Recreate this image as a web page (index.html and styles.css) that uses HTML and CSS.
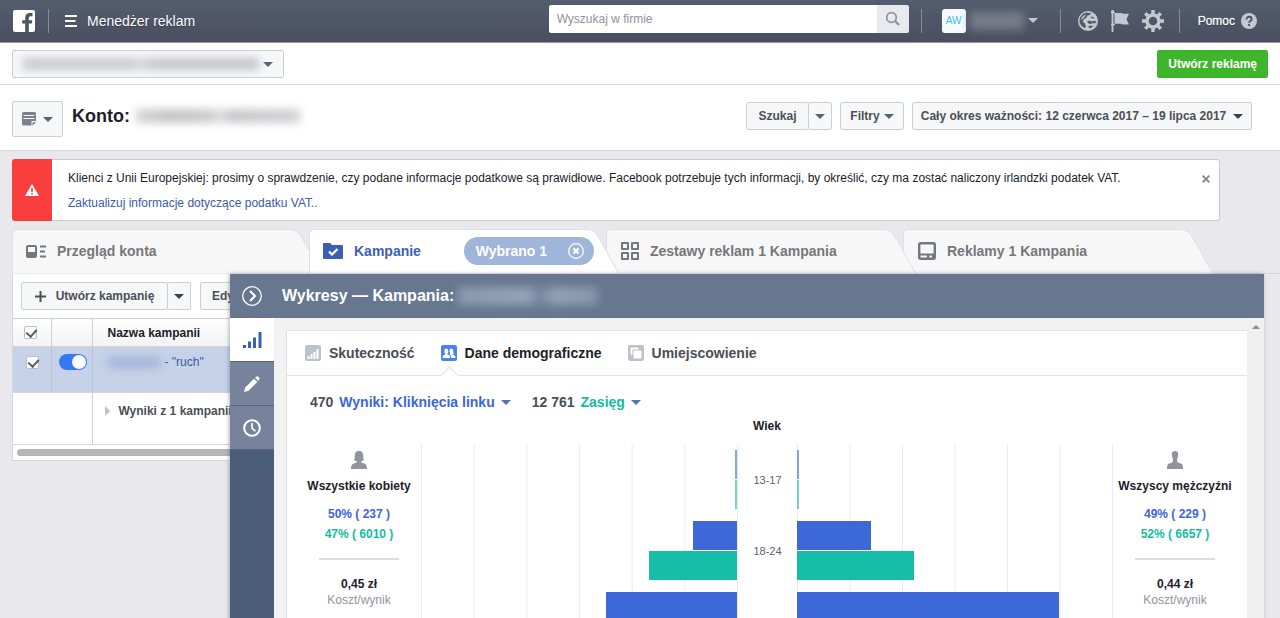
FILE: index.html
```html
<!DOCTYPE html>
<html lang="pl">
<head>
<meta charset="utf-8">
<title>Menedżer reklam</title>
<link rel="stylesheet" href="styles.css">
</head>
<body>
<header class="topbar">
  <a class="logo" href="#" aria-label="Facebook">
    <svg width="22" height="22" viewBox="0 0 22 22"><rect width="22" height="22" rx="2" fill="#fff"/><path d="M12.200 22v-8.400H9.200v-3.400h3V7.700c0-3 1.800-4.700 4.600-4.700 1.300 0 2.400.1 2.700.1v3.100h-1.800c-1.500 0-1.900.8-1.900 1.800v2.200h3.500l-.5 3.400h-3V22z" fill="#4d5566"/></svg>
  </a>
  <span class="divider"></span>
  <button class="menu" type="button">
    <svg width="12" height="12" viewBox="0 0 12 12"><path d="M0 1h12M0 6h10.500M0 11h12" stroke="#fff" stroke-width="2"/></svg>
    Menedżer reklam
  </button>
  <form class="search">
    <input type="text" placeholder="Wyszukaj w firmie" aria-label="Wyszukaj w firmie">
    <button type="button" aria-label="Wyszukaj"><svg width="16" height="16" viewBox="0 0 16 16"><circle cx="6.500" cy="6.500" r="4.800" fill="none" stroke="#90949c" stroke-width="1.800"/><path d="M10 10l4.200 4" stroke="#90949c" stroke-width="2.400"/></svg></button>
  </form>
  <span class="divider"></span>
  <button class="account" type="button" aria-label="Konto użytkownika">
    <span class="avatar">AW</span><span class="smudge smudge-user"></span><span class="caret caret-light"></span>
  </button>
  <span class="divider"></span>
  <nav class="top-icons">
    <button type="button" aria-label="Powiadomienia"><svg width="20" height="20" viewBox="0 0 20 20"><circle cx="10" cy="10" r="10" fill="#c4c8d0"/><path d="M8.500 1.500c2 .3 3 1 5 .8l-2 1.700-2 .5L8 7 5.500 8.500 5 11l2 1.500 1 3-1.500 1.500C3.500 15.500 1.500 13 1.500 10c0-4 3-7.800 7-8.500zM9 10.500l2.500-1 2 1 3-.8 2 1-1.500 1.800-2-.5-2 1-2.500-.5z" fill="#515a6b"/><path d="M3 8.500C4 6 5.500 4 8 3.500L6.500 6 4 8.500zM13.500 6l2.500.5.500 1.500-2-.5zM9.500 16l3-1.500 2.500 1-3 2.500z" fill="#c4c8d0"/><path d="M10 15.500l3-1 2.500.8-3.500 2.200zM12.500 5.500l3 .5.8 1.800-2.800-.6z" fill="#515a6b"/></svg></button>
    <button type="button" aria-label="Strony"><svg width="18" height="22" viewBox="0 0 18 22"><path d="M1.500 1v21" stroke="#c4c8d0" stroke-width="1.800"/><circle cx="1.500" cy="1.300" r="1.300" fill="#c4c8d0"/><path d="M3.500 3h7c1 0 1 .8 2 .8H18l-2.500 5.400L18 14.500h-6c-1 0-1-.8-2-.8H3.500z" fill="#c4c8d0"/><path d="M0 14.500h4M0 2.500h4" stroke="#c4c8d0" stroke-width="1.500"/></svg></button>
    <button type="button" aria-label="Ustawienia"><svg width="22" height="22" viewBox="-11 -11 22 22"><g fill="none" stroke="#c4c8d0"><circle r="6" stroke-width="3.400"/><g stroke-width="3.400"><path id="teeth" d="M0-11v4.500M0 6.500V11M-11 0h4.500M6.500 0H11"/><use href="#teeth" transform="rotate(45)"/></g></g></svg></button>
  </nav>
  <span class="divider"></span>
  <a class="help" href="#">Pomoc
    <svg width="16" height="16" viewBox="0 0 16 16"><circle cx="8" cy="8" r="8" fill="#c4c8d0"/><path d="M5.500 6.400c0-3.700 5.200-3.300 5.200-.3C10.700 8 8.100 8 8.100 9.800M8.100 11v2" fill="none" stroke="#4c5263" stroke-width="1.900"/></svg>
  </a>
</header>

<div class="accountbar">
  <button class="btn account-select" type="button" aria-label="Wybierz konto"><span class="smudge smudge-account"></span><span class="caret"></span></button>
  <button class="create" type="button">Utwórz reklamę</button>
</div>

<div class="titlebar">
  <button class="btn note" type="button" aria-label="Raporty">
    <svg width="14" height="14" viewBox="0 0 14 14"><path d="M1.500 0h11A1.500 1.500 0 0 1 14 1.500V9h-4.500v4.500h-8A1.500 1.500 0 0 1 0 12V1.500A1.500 1.500 0 0 1 1.500 0z" fill="#7b818d"/><path d="M10.500 10.300H14l-3.500 3.500z" fill="#7b818d"/><path d="M1.500 3.500h11M1.500 6.500h11" stroke="#f6f7f9"/></svg>
    <span class="caret"></span>
  </button>
  <h1>Konto: <span class="smudge smudge-title"></span></h1>
  <div class="filters">
    <div class="split"><button class="btn find" type="button">Szukaj</button><button class="btn arrow" type="button" aria-label="Opcje wyszukiwania"><span class="caret"></span></button></div>
    <button class="btn filter" type="button">Filtry <span class="caret"></span></button>
    <button class="btn range" type="button">Cały okres ważności: 12 czerwca 2017 – 19 lipca 2017 <span class="caret caret-dark"></span></button>
  </div>
</div>

<main class="main">
  <section class="alert">
    <div class="alert-icon"><svg width="14" height="12" viewBox="0 0 14 12"><path d="M7 0l7 12H0z" fill="#fff"/><path d="M7 4v4M7 9v1.500" stroke="#fa3e3e" stroke-width="1.600"/></svg></div>
    <div class="alert-text">
      <p>Klienci z Unii Europejskiej: prosimy o sprawdzenie, czy podane informacje podatkowe są prawidłowe. Facebook potrzebuje tych informacji, by określić, czy ma zostać naliczony irlandzki podatek VAT.</p>
      <a href="#">Zaktualizuj informacje dotyczące podatku VAT..</a>
    </div>
    <button class="close" type="button" aria-label="Zamknij"><svg width="8" height="8" viewBox="0 0 8 8"><path d="M.7.7l6.600 6.600M7.300.7L.7 7.300" stroke="#7f8591" stroke-width="1.800"/></svg></button>
  </section>

  <nav class="tabs">
    <a class="tab tab-1" href="#">
      <svg class="shape" width="312" height="45" viewBox="0 0 312 45"><path d="M.5 45V5Q.5.500 5 .5H278Q286 .5 290 9L310 45z"/></svg>
      <svg width="20" height="13" viewBox="0 0 20 13"><path d="M2 0h7a2 2 0 0 1 2 2v9a2 2 0 0 1-2 2H2a2 2 0 0 1-2-2V2a2 2 0 0 1 2-2zm0 2v5h7V2z" fill="#75777b" fill-rule="evenodd"/><path d="M14 1.500h6M14 6.500h5M14 11.500h6" stroke="#75777b" stroke-width="2"/></svg>
      <span>Przegląd konta</span>
    </a>
    <div class="tab tab-2 active">
      <svg class="shape" width="312" height="45" viewBox="0 0 312 45"><path d="M.5 45V5Q.5.500 5 .5H278Q286 .5 290 9L310 45z"/></svg>
      <svg width="20" height="16" viewBox="0 0 20 16"><path d="M1 0h6l2 2h10q1 0 1 1v12q0 1-1 1H1q-1 0-1-1V1q0-1 1-1z" fill="#3b5fb5"/><path d="M6 8.500l3 3L14.500 6" fill="none" stroke="#fff" stroke-width="2.200"/></svg>
      <a href="#">Kampanie</a>
      <button class="chip" type="button">Wybrano 1
        <svg width="16" height="16" viewBox="0 0 16 16"><circle cx="8" cy="8" r="7.300" fill="none" stroke="#fff" stroke-width="1.200"/><path d="M5.500 5.500l5 5M10.500 5.500l-5 5" stroke="#fff" stroke-width="2.200"/></svg>
      </button>
    </div>
    <a class="tab tab-3" href="#">
      <svg class="shape" width="312" height="45" viewBox="0 0 312 45"><path d="M.5 45V5Q.5.500 5 .5H278Q286 .5 290 9L310 45z"/></svg>
      <svg width="18" height="18" viewBox="0 0 18 18"><path d="M1 1h6v6H1zM11 1h6v6h-6zM1 11h6v6H1zM11 11h6v6h-6z" fill="none" stroke="#75777b" stroke-width="2" stroke-linejoin="round"/></svg>
      <span>Zestawy reklam 1 Kampania</span>
    </a>
    <a class="tab tab-4" href="#">
      <svg class="shape" width="312" height="45" viewBox="0 0 312 45"><path d="M.5 45V5Q.5.500 5 .5H278Q286 .5 290 9L310 45z"/></svg>
      <svg width="18" height="18" viewBox="0 0 18 18"><rect x="1.200" y="1.200" width="15.600" height="15.600" rx="1.500" fill="none" stroke="#75777b" stroke-width="2.400"/><path d="M1 11.500h16V17H1z" fill="#75777b"/><path d="M2.500 13.500H9v2H2.500zM11.500 13.500H14v2h-2.500z" fill="#f6f7f9"/></svg>
      <span>Reklamy 1 Kampania</span>
    </a>
  </nav>

  <div class="workspace">
    <section class="list">
      <div class="toolbar">
        <div class="split"><button class="btn add" type="button"><svg width="11" height="11" viewBox="0 0 11 11"><path d="M5.500 0v11M0 5.500h11" stroke="#4b4f56" stroke-width="2"/></svg>Utwórz kampanię</button><button class="btn arrow" type="button" aria-label="Więcej"><span class="caret caret-dark"></span></button></div>
        <button class="btn edit" type="button">Edytuj</button>
      </div>
      <table>
        <thead>
          <tr><th class="c-check"><input type="checkbox" checked aria-label="Zaznacz wszystkie"></th><th class="c-switch"></th><th class="c-name">Nazwa kampanii</th></tr>
        </thead>
        <tbody>
          <tr class="selected"><td class="c-check"><input type="checkbox" checked aria-label="Zaznacz kampanię"></td><td class="c-switch"><input class="switch" type="checkbox" checked aria-label="Kampania aktywna"></td><td class="c-name"><a href="#"><span class="smudge smudge-row"></span>- "ruch"</a></td></tr>
          <tr class="summary"><td colspan="2"></td><td class="c-name"><span class="triangle"></span>Wyniki z 1 kampanii</td></tr>
        </tbody>
      </table>
      <div class="hscroll"><span></span></div>
    </section>

    <aside class="drawer">
      <header class="drawer-head">
        <button type="button" aria-label="Zwiń"><svg width="20" height="20" viewBox="0 0 20 20"><circle cx="10" cy="10" r="9.300" fill="none" stroke="#fff" stroke-width="1.300"/><path d="M8 5l5 5-5 5" fill="none" stroke="#fff" stroke-width="2"/></svg></button>
        <h2>Wykresy — Kampania:</h2><span class="smudge smudge-drawer"></span>
      </header>
      <div class="drawer-body">
        <nav class="rail">
          <button class="on" type="button" aria-label="Wykresy"><svg width="19" height="16" viewBox="0 0 19 16"><path d="M0 13h3v3H0zM5 9.500h3V16H5zM10 5.500h3V16h-3zM15.500 0h3v16h-3z" fill="#3b5fc0"/></svg></button>
          <button type="button" aria-label="Edytuj"><svg width="16" height="16" viewBox="0 0 16 16"><path d="M0 16l1.200-4.500L10 2.700 13.300 6l-8.800 8.800zM11 1.700L12.700.5q.8-.6 1.600.2l1 1q.8.800.1 1.600L14.300 5z" fill="#fff"/></svg></button>
          <button type="button" aria-label="Historia"><svg width="18" height="18" viewBox="0 0 18 18"><circle cx="9" cy="9" r="7.800" fill="none" stroke="#fff" stroke-width="2"/><path d="M9 4v5.200l3.300 3" fill="none" stroke="#fff" stroke-width="1.700"/></svg></button>
        </nav>
        <div class="content">
          <div class="card">
            <nav class="card-tabs">
              <a href="#"><svg width="16" height="16" viewBox="0 0 16 16"><rect width="16" height="16" rx="2" fill="#bdc1c9"/><path d="M2.500 11h2v3h-2zM5.500 9h2v5h-2zM8.500 7h2v7h-2zM11.500 4h2v10h-2z" fill="#fff"/></svg>Skuteczność</a>
              <a class="current" href="#"><svg width="16" height="16" viewBox="0 0 16 16"><rect width="16" height="16" rx="2" fill="#4c81f5"/><path d="M1.500 13q0-2.600 1.500-3l1.300-.5V8.600Q3.300 7.500 3.300 6q0-2.600 2-2.600t2 2.600q0 1.500-.9 2.600v.9L8 10q1.200.4 1.200 3z" fill="#fff"/><path d="M8.700 9.200l.7-.4Q8.200 7 8.500 5.300q.3-1.900 1.800-1.900 1.800 0 1.900 2.200 0 1.600.6 3l-1.200.6v.4l1.700.6q1.200.4 1.200 2.800h-4.200q0-2.600-1.600-3.500z" fill="#fff"/></svg>Dane demograficzne</a>
              <a href="#"><svg width="16" height="16" viewBox="0 0 16 16"><rect width="16" height="16" rx="2" fill="#bdc1c9"/><path d="M3.500 9.500v-6h7" fill="none" stroke="#fff" stroke-width="1.800"/><rect x="5.500" y="5.500" width="8" height="8" rx="1" fill="#fff"/></svg>Umiejscowienie</a>
            </nav>
            <div class="metrics">
              <button type="button">470 <b class="blue">Wyniki: Kliknięcia linku</b><span class="caret caret-blue"></span></button>
              <button type="button">12 761 <b class="green">Zasięg</b><span class="caret caret-blue"></span></button>
            </div>
            <div class="chart-title">Wiek</div>
            <div class="chart">
              <div class="person">
                <svg width="16" height="18" viewBox="0 0 16 18"><path d="M8 0c3.300 0 4.200 2 4.200 4.600 0 2.200.6 3.600.4 4.800l-2.300.8v1.300l3.600 1.300Q16 13.700 16 18H0q0-4.300 2.100-5.200l3.600-1.300v-1.300l-2.300-.8c-.2-1.200.4-2.600.4-4.800C3.800 2 4.700 0 8 0z" fill="#90949c"/></svg>
                <strong>Wszystkie kobiety</strong>
                <b class="blue">50% ( 237 )</b><b class="green">47% ( 6010 )</b><hr>
                <strong class="cost">0,45 zł</strong><small>Koszt/wynik</small>
              </div>
              <div class="plot plot-left">
                <div class="group faint"><i class="bar-blue" style="width:0.6%"></i><i class="bar-green" style="width:0.6%"></i></div>
                <div class="group"><i class="bar-blue" style="width:13.9%"></i><i class="bar-green" style="width:27.8%"></i></div>
                <div class="group"><i class="bar-blue" style="width:41.600%"></i></div>
              </div>
              <div class="ages"><span>13-17</span><span>18-24</span></div>
              <div class="plot plot-right">
                <div class="group faint"><i class="bar-blue" style="width:0.6%"></i><i class="bar-green" style="width:0.6%"></i></div>
                <div class="group"><i class="bar-blue" style="width:23.4%"></i><i class="bar-green" style="width:37.200%"></i></div>
                <div class="group"><i class="bar-blue" style="width:83.300%"></i></div>
              </div>
              <div class="person">
                <svg width="16" height="18" viewBox="0 0 16 18"><path d="M8 0c2.500 0 3.400 1.600 3.200 4-.1 2-.9 2.800-1.100 4v2q.2 1.500 2 2l2.400.8Q16 13.500 16 18H0q0-4.500 1.500-5.200L3.900 12q1.800-.5 2-2V8C5.700 6.800 4.900 6 4.800 4 4.600 1.600 5.500 0 8 0z" fill="#90949c"/></svg>
                <strong>Wszyscy mężczyźni</strong>
                <b class="blue">49% ( 229 )</b><b class="green">52% ( 6657 )</b><hr>
                <strong class="cost">0,44 zł</strong><small>Koszt/wynik</small>
              </div>
            </div>
          </div>
        </div>
        <div class="vscroll"><span></span></div>
      </div>
    </aside>
  </div>
</main>
</body>
</html>
```

FILE: styles.css
```css
* { box-sizing: border-box; }
body {
  margin: 0;
  min-height: 100vh;
  overflow: hidden;
  background: #e9e9ed;
  color: #1d2129;
  font: 12px/16px "Liberation Sans", Arial, sans-serif;
}
button, input { font: inherit; color: inherit; }
button { border: 0; background: none; padding: 0; cursor: pointer; }
a { color: #3b5ba5; text-decoration: none; }
svg { display: block; flex: none; }
h1, h2, p { margin: 0; }

.caret {
  flex: none;
  width: 0;
  height: 0;
  border: 5px solid transparent;
  border-top-color: #5a6172;
  border-bottom: 0;
}
.caret-light { border-top-color: #c4c8d0; }
.caret-dark { border-top-color: #3c4048; }
.caret-blue { border-top-color: #5273b8; }

/* Obscured names */
.smudge { display: inline-block; flex: none; filter: blur(4px); }
.smudge-user { width: 54px; height: 18px; background: #767c89; }
.smudge-account { width: 236px; height: 12px; background: linear-gradient(90deg, #c8c9cf 45%, #d6d7dc 50%, #c4c6cd 56%); }
.smudge-title { width: 164px; height: 14px; background: linear-gradient(90deg, #d6d6d8, #c4c4c7 20%, #cbcbcd 45%, #e0e0e1 51%, #c8c8ca 58%, #d2d2d4); }
.smudge-row { width: 52px; height: 11px; margin-right: 5px; background: #a3b5dc; vertical-align: middle; }
.smudge-drawer { width: 140px; height: 18px; background: linear-gradient(90deg, #8b9aae, #95a3b6 50%, #73849b 58%, #94a2b5 70%, #8495aa); }

.topbar {
  display: flex;
  align-items: center;
  height: 43px;
  padding: 0 23px 1px 13px;
  border-bottom: 1px solid #9599a5;
  background: linear-gradient(#545d6e, #4a4f5f);
  color: #fff;
}
.divider { width: 1px; height: 24px; background: #858b98; }
.logo + .divider { margin: 0 16px 0 13px; }
.menu { display: flex; align-items: center; gap: 10px; font-size: 14px; text-shadow: 0 1px 1px #333a48; }
.search { display: flex; align-self: flex-start; width: 360px; height: 28px; margin: 5px 12px 0 auto; border-radius: 2px; overflow: hidden; }
.search input { flex: 1; min-width: 0; border: 0; padding: 0 8px; background: #fff; color: #1d2129; }
.search input::placeholder { color: #8d949e; opacity: 1; }
.search button { display: grid; place-items: center; width: 32px; background: #e9eaed; }
.account { display: flex; align-items: center; gap: 4px; margin: 0 22px 0 20px; }
.avatar { width: 24px; height: 24px; border-radius: 3px; background: #f4fafe; color: #4cb8e8; font-size: 10px; line-height: 24px; }
.top-icons { display: flex; align-items: center; gap: 13px; margin: 0 15px 0 17px; }
.help { display: flex; align-items: center; gap: 6px; margin-left: 18px; color: #fff; text-shadow: 0 1px 1px #333a48, 0 0 1px #fff; }

.btn {
  display: flex;
  align-items: center;
  justify-content: center;
  height: 28px;
  border: 1px solid #cdd0d6;
  border-radius: 2px;
  background: #f6f7f9;
  color: #4b4f56;
  font-weight: bold;
  white-space: nowrap;
}
.split { display: flex; }
.split .btn + .btn { margin-left: -1px; }
.arrow { width: 24px; }

.accountbar { display: flex; justify-content: space-between; padding: 7px 12px 6px; border-bottom: 1px solid #d3d5d9; background: #fff; }
.account-select { gap: 4px; width: 272px; }
.create { height: 28px; padding: 0 11px; border-radius: 2px; background: #3fb52b; color: #fff; font-weight: bold; }

.titlebar { display: flex; align-items: flex-start; padding: 16px 28px 13px 12px; border-bottom: 1px solid #d8d9dc; background: #fff; }
.note { gap: 7px; width: 51px; height: 36px; }
.titlebar h1 { display: flex; align-items: center; gap: 6px; margin-left: 9px; font-size: 18px; line-height: 30px; }
.filters { display: flex; gap: 8px; margin-left: auto; padding-top: 1px; }
.find { width: 63px; }
.filter { gap: 4px; width: 64px; }
.range { gap: 7px; width: 340px; }

.main { padding: 8px 0 0 12px; }
.alert { display: flex; min-height: 62px; margin-right: 60px; border: 1px solid #c9cad0; border-left: 0; border-radius: 3px; background: #fff; }
.alert-icon { display: grid; place-items: center; width: 40px; margin: -1px 0; border-radius: 3px 0 0 3px; background: #fa3e3e; }
.alert-text { flex: 1; padding: 10px 0 8px 16px; }
.alert-text p { margin-bottom: 9px; }
.close { align-self: flex-start; padding: 15px 9px; }

.tabs { display: flex; margin-top: 8px; padding-right: 60px; border-bottom: 1px solid #d5d6da; }
.tab { position: relative; display: flex; align-items: center; width: 297px; height: 44px; padding-left: 14px; color: #75777b; font-size: 14px; font-weight: bold; white-space: nowrap; }
.tab > :not(.shape) { position: relative; }
.tab .shape { position: absolute; left: 0; top: 0; }
.shape path { fill: #f7f7f8; stroke: #dfdfe5; }
.active .shape path { fill: #fff; }
.tab-1 { z-index: 1; }
.tab-2 { z-index: 4; }
.tab-3 { z-index: 3; padding-left: 15px; }
.tab-4 { z-index: 2; padding-left: 15px; }
.tab span, .tab > a { margin-left: 11px; }
.tab > a { color: #3b5fb5; }
.chip { display: flex; align-items: center; gap: 21px; height: 28px; margin-left: auto; margin-right: 12px; padding: 0 10px 0 12px; border-radius: 14px; background: #a0b5da; color: #fff; font-weight: bold; }

.workspace { position: relative; }
.list { border: 1px solid #d5d6da; border-top: 0; background: #fff; margin-right: 60px; overflow: hidden; }
.toolbar { display: flex; gap: 9px; padding: 8px 8px; }
.add { gap: 10px; width: 147px; padding: 0 6px; }
.edit { padding: 0 11px; }
table { width: 100%; border-collapse: collapse; border-top: 1px solid #cfd0d4; }
th, td { padding: 0; text-align: left; border-right: 1px solid #ced0d6; }
th { height: 28px; background: linear-gradient(#fff, #f2f2f4); border-bottom: 1px solid #d5d6da; }
.selected td { height: 46px; padding-top: 7px; vertical-align: top; background: #c5d2e7; border-right-color: #b9c4d8; border-bottom: 1px solid #d0d4dc; }
.c-check { width: 38px; padding-left: 11px; }
.selected .c-check { padding: 9px 0 0 13px; }
.c-switch { width: 41px; padding-left: 7px; }
.c-name { padding-left: 15px; }
.summary td { height: 52px; padding-top: 10px; vertical-align: top; border-bottom: 1px solid #d5d6da; color: #4b4f56; font-weight: bold; }
.summary .c-name { padding-left: 12px; }
.triangle { display: inline-block; margin-right: 9px; border: 5px solid transparent; border-left-color: #bfc1c6; border-right: 0; vertical-align: -1px; }
input[type="checkbox"] {
  appearance: none;
  display: block;
  width: 13px;
  height: 13px;
  margin: 0;
  border: 1px solid #b9bcc4;
  border-radius: 2px;
  background: #fff;
}
.c-check input::before {
  content: "";
  display: block;
  width: 5px;
  height: 8px;
  margin: 0 0 0 3px;
  border: solid #555b66;
  border-width: 0 2px 2px 0;
  transform: rotate(42deg);
}
input.switch[type="checkbox"] { width: 28px; height: 16px; padding: 1px; border: 0; border-radius: 8px; background: #3578f5; }
.switch::before { content: ""; display: block; width: 14px; height: 14px; margin-left: 12px; border-radius: 7px; background: #fff; }
.hscroll { padding: 4px; }
.hscroll span { display: block; width: 60%; height: 7px; border-radius: 4px; background: #b5b5b6; }

/* Chart drawer, laid over the campaign list */
.drawer { position: absolute; z-index: 5; top: 0; left: 218px; right: 16px; box-shadow: -1px 0 4px rgba(60, 70, 90, .4); }
.drawer-head { display: flex; align-items: center; height: 44px; padding-left: 12px; background: #66778f; color: #fff; }
.drawer-head h2 { margin: 0 4px 0 20px; font-size: 16px; line-height: 20px; }
.drawer-body { display: flex; }
.rail { flex: none; width: 44px; background: #4a5d79; }
.rail button { display: grid; place-items: center; width: 44px; height: 44px; border-bottom: 1px solid #55637c; background: #77839c; }
.rail .on { background: #fff; }
.content { flex: 1; min-width: 0; padding: 12px 0 0 12px; background: #f2f2f3; }
.card { border: 1px solid #e1e1e4; border-right: 0; background: #fff; }
.vscroll { flex: none; width: 17px; padding: 7px 0 0 5px; background: #f0f0f1; }
.vscroll span { display: block; width: 0; border: 4px solid transparent; border-bottom-color: #8a8c92; border-top: 0; }
.card-tabs { display: flex; gap: 26px; padding-left: 18px; border-bottom: 1px solid #e3e4e8; font-size: 14px; font-weight: bold; }
.card-tabs a { position: relative; display: flex; align-items: center; gap: 8px; height: 44px; color: #4b4f56; }
.card-tabs .current { color: #1d2129; }
.current::after {
  content: "";
  position: absolute;
  left: 2px;
  bottom: -7px;
  width: 12px;
  height: 12px;
  border: solid #e3e4e8;
  border-width: 1px 0 0 1px;
  background: #fff;
  transform: rotate(45deg);
}
.metrics { display: flex; gap: 21px; padding: 18px 22px 6px 23px; font-size: 14px; font-weight: bold; color: #4b4f56; }
.metrics button { display: flex; align-items: center; gap: 6px; line-height: 16px; }
.blue { color: #3b67d8; }
.green { color: #13bda0; }
.chart-title { text-align: center; font-weight: bold; line-height: 16px; padding: 2px 0 10px; }
.chart { display: grid; grid-template-columns: 124px 1fr 60px 1fr 124px; padding: 0 10px; }
.person { display: flex; flex-direction: column; align-items: center; padding-top: 7px; white-space: nowrap; }
.person strong { margin-top: 9px; }
.person b { margin-top: 4px; }
.person strong + b { margin-top: 12px; }
.person hr { width: 80px; margin: 16px 0 7px; border: 0; border-top: 2px solid #dcdde0; }
.person small { font-size: 12px; color: #90949c; }
.plot { background: linear-gradient(90deg, #ebebee 1px, transparent 1px) 0 0 / calc(100% / 6) 100%; }
.group { display: flex; flex-direction: column; gap: 1px; padding: 6px 0; }
.group i { min-width: 2px; height: 29px; }
.plot-left .group { align-items: flex-end; }
.bar-blue { background: #3c69d7; }
.bar-green { background: #15bea6; }
.faint { opacity: .6; }
.ages { display: grid; grid-auto-rows: 71px; align-content: start; place-items: center; border-left: 1px solid #ebebee; font-size: 11px; color: #5c6270; }
.plot-right { border-right: 1px solid #ebebee; }
```
